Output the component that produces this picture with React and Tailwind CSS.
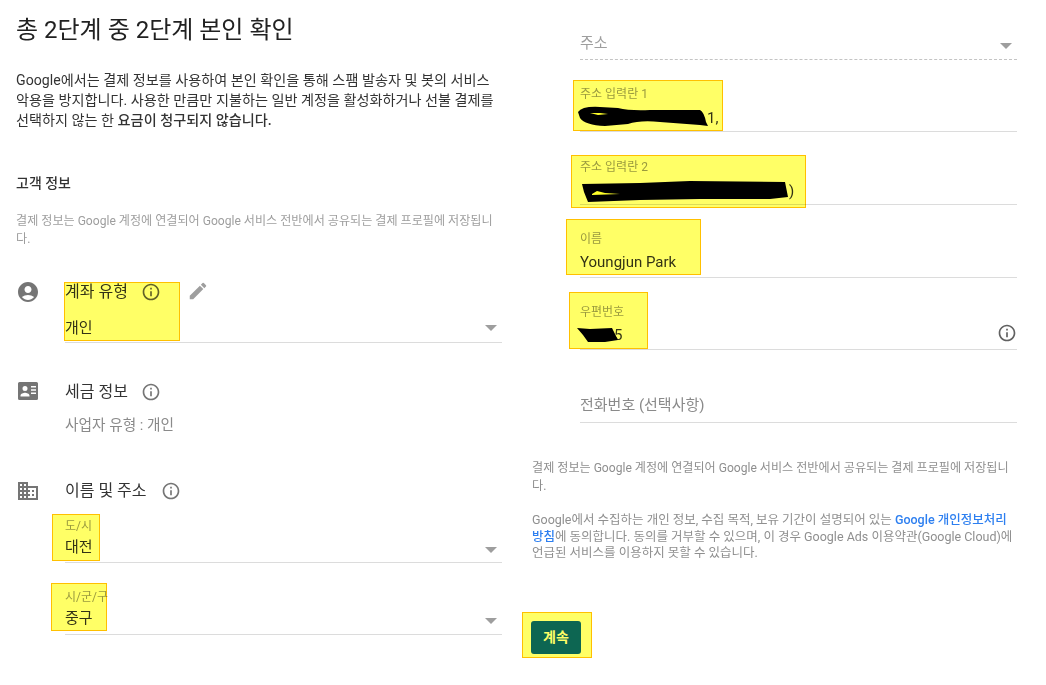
import { MdAccountCircle, MdDomain, MdEdit, MdInfoOutline } from "react-icons/md";

function Arrow({ className }) {
  return (
    <svg viewBox="0 0 12 6" className={`w-3 h-[6px] fill-[#9e9e9e] ${className || ""}`}>
      <path d="M0 0h12L6 6z" />
    </svg>
  );
}

function TaxIcon() {
  return (
    <svg viewBox="0 0 20 18" className="w-5 h-[18px]">
      <path
        fill="#757575"
        fillRule="evenodd"
        d="M1.5 0h17A1.5 1.5 0 0 1 20 1.5v15a1.5 1.5 0 0 1-1.5 1.5h-17A1.5 1.5 0 0 1 0 16.500v-15A1.500 1.500 0 0 1 1.500 0zM7 4a2.500 2.500 0 1 0 0 5 2.500 2.500 0 0 0 0-5zM2.500 13.500V14.500h9v-1c0-1.800-3-2.800-4.500-2.800s-4.500 1-4.500 2.800zM13 4v1.500h5V4zM13 7.300v1.500h5V7.300zM13 10.600v1.500h5v-1.500z"
      />
    </svg>
  );
}

function SelectField({ label, value, className, valueClass }) {
  return (
    <div className={`w-[437px] border-b border-[#dcdcdc] ${className}`}>
      <div className="text-xs leading-4 text-[#9a9a9a]">{label}</div>
      <div className={`flex items-center justify-between pr-[5px] text-[15px] leading-5 text-[#333] ${valueClass}`}>
        {value}
        <Arrow className="mt-[6px]" />
      </div>
    </div>
  );
}

function InputField({ label, value, className, valueClass, children }) {
  return (
    <div className={`relative border-b border-[#dcdcdc] ${className}`}>
      <div className="text-xs leading-4 text-[#9a9a9a]">{label}</div>
      <div className={`text-[15px] leading-5 text-[#333] ${valueClass}`}>{value}</div>
      {children}
    </div>
  );
}

export default function App() {
  return (
    <div className="relative flex h-[685px] w-[1046px] overflow-hidden bg-white font-['Roboto','Noto_Sans_CJK_KR',sans-serif]">
      {/* left column */}
      <div className="w-[532px] shrink-0 pl-4">
        <h1 className="mt-[14px] text-2xl leading-8 text-[#212121]">총 2단계 중 2단계 본인 확인</h1>
        <p className="mt-[24px] w-[482px] text-[14.15px] leading-5 text-[#333]">
          Google에서는 결제 정보를 사용하여 본인 확인을 통해 스팸 발송자 및 봇의 서비스 악용을 방지합니다. 사용한 만큼만 지불하는 일반 계정을 활성화하거나 선불 결제를 선택하지 않는 한{" "}
          <span className="font-medium">요금이 청구되지 않습니다.</span>
        </p>
        <h2 className="mt-[43px] text-sm leading-5 font-medium text-[#333]">고객 정보</h2>
        <p className="mt-[19px] w-[482px] text-[12.1px] leading-[18px] text-[#9e9e9e]">
          결제 정보는 Google 계정에 연결되어 Google 서비스 전반에서 공유되는 결제 프로필에 저장됩니다.
        </p>

        <div className="mt-[34px] flex">
          <MdAccountCircle className="mt-[-2px] w-6 h-6 text-[#757575]" />
          <div className="ml-[25px] w-[437px] h-[61px] border-b border-[#dcdcdc]">
            <div className="flex items-center text-base leading-5 text-[#333]">
              계좌 유형
              <MdInfoOutline className="ml-[13px] w-5 h-5 text-[#616161]" />
              <MdEdit className="ml-[26px] mt-[-2px] w-[22px] h-[22px] text-[#9e9e9e]" />
            </div>
            <div className="mt-[16px] flex items-center justify-between pr-[5px] text-[15px] leading-5 text-[#333]">
              개인
              <Arrow />
            </div>
          </div>
        </div>

        <div className="mt-[39px] flex">
          <div className="ml-[2px]">
            <TaxIcon />
          </div>
          <div className="ml-[27px]">
            <div className="flex items-center text-base leading-5 text-[#333]">
              세금 정보
              <MdInfoOutline className="ml-[13px] w-5 h-5 text-[#757575]" />
            </div>
            <div className="mt-[13px] text-[14.7px] leading-5 text-[#8a8a8a]">사업자 유형 : 개인</div>
          </div>
        </div>

        <div className="mt-[46px] flex">
          <MdDomain className="mt-[-2px] w-6 h-6 text-[#757575]" />
          <div className="ml-[25px]">
            <div className="flex items-center text-base leading-5 text-[#333]">
              이름 및 주소
              <MdInfoOutline className="ml-[14px] w-5 h-5 text-[#757575]" />
            </div>
            <SelectField label="도/시" value="대전" className="mt-[17px] h-[45px]" valueClass="mt-[3px]" />
            <SelectField label="시/군/구" value="중구" className="mt-[26px] h-[46px]" valueClass="mt-[3px]" />
          </div>
        </div>
      </div>

      {/* right column */}
      <div className="flex-1">
        <div className="ml-[48px] mt-[32px] flex h-[28px] w-[437px] items-start justify-between border-b border-dashed border-[#c4c4c4] pt-px pr-[5px] text-[15px] leading-5 text-[#9e9e9e]">
          주소
          <Arrow className="mt-[10px]" />
        </div>
        <div className="ml-[48px] w-[437px]">
          <InputField label="주소 입력란 1" value={<span className="pl-[127px]">1,</span>} className="mt-[26px] h-[46px]" valueClass="mt-[6px]" />
          <InputField label="주소 입력란 2" value={<span className="pl-[209px]">)</span>} className="mt-[27px] h-[46px]" valueClass="mt-[6px]" />
          <InputField label="이름" value="Youngjun Park" className="mt-[26px] h-[47px]" valueClass="mt-[5px]" />
          <InputField label="우편번호" value={<span className="pl-[34px]">5</span>} className="mt-[26px] h-[46px]" valueClass="mt-[5px]">
            <MdInfoOutline className="absolute right-0 top-[19px] w-5 h-5 text-[#616161]" />
          </InputField>
          <div className="mt-[45px] h-[28px] border-b border-[#dcdcdc] text-[15px] leading-5 text-[#8a8a8a]">
            전화번호 (선택사항)
          </div>
        </div>
        <div className="mt-[36px] w-[486px] text-[#8f8f8f]">
          <p className="text-[12.1px] leading-[18px]">
            결제 정보는 Google 계정에 연결되어 Google 서비스 전반에서 공유되는 결제 프로필에 저장됩니다.
          </p>
          <p className="mt-[17px] text-[12.5px] leading-[16.500px]">
            Google에서 수집하는 개인 정보, 수집 목적, 보유 기간이 설명되어 있는{" "}
            <span className="font-medium text-[#2d7ff0]">Google 개인정보처리방침</span>에 동의합니다. 동의를 거부할 수 있으며, 이 경우 Google Ads 이용약관(Google Cloud)에 언급된 서비스를 이용하지 못할 수 있습니다.
          </p>
        </div>
        <button className="relative z-10 mt-[59px] ml-[-1px] h-[33px] w-[50px] rounded-[3px] bg-[#0d6652] text-sm font-bold text-[#ffff66]">
          계속
        </button>
      </div>

      {/* scribbled-out text */}
      <svg viewBox="0 0 1046 685" className="absolute inset-0 w-[1046px] h-[685px] pointer-events-none">
        <path d="M578 112 Q582 106 600 107 L618 108 Q630 111 650 110 L700 110 Q704 112 706 122 L708 126 L700 125 L660 122 Q640 120 628 124 L605 126 Q585 125 580 118z" fill="#000" />
        <path d="M582 184 L640 183 L690 181 L785 182 L788 197 L770 199 L700 199 L640 200 L588 202 L584 192z" fill="#000" />
        <path d="M577 328 L590 329 L612 328 L618 340 L605 342 L588 342 L583 335z" fill="#000" />
        <path d="M590 113 L600 113 L608 114 L598 115z" fill="#ffff66" />
        <path d="M592 194 L597 191 L605 193 L620 194 L592 195z" fill="#ffff66" />
      </svg>

      {/* yellow highlights */}
      <div className="absolute left-[64px] top-[282px] h-[59px] w-[116px] border border-[#ffc000] bg-[#ffff66] mix-blend-multiply" />
      <div className="absolute left-[52px] top-[514px] h-[47px] w-[48px] border border-[#ffc000] bg-[#ffff66] mix-blend-multiply" />
      <div className="absolute left-[51px] top-[583px] h-[48px] w-[56px] border border-[#ffc000] bg-[#ffff66] mix-blend-multiply" />
      <div className="absolute left-[573px] top-[80px] h-[51px] w-[150px] border border-[#ffc000] bg-[#ffff66] mix-blend-multiply" />
      <div className="absolute left-[571px] top-[155px] h-[53px] w-[235px] border border-[#ffc000] bg-[#ffff66] mix-blend-multiply" />
      <div className="absolute left-[566px] top-[219px] h-[56px] w-[135px] border border-[#ffc000] bg-[#ffff66] mix-blend-multiply" />
      <div className="absolute left-[569px] top-[292px] h-[57px] w-[79px] border border-[#ffc000] bg-[#ffff66] mix-blend-multiply" />
      <div className="absolute left-[522px] top-[612px] h-[46px] w-[70px] border border-[#ffc000] bg-[#ffff66]" />
    </div>
  );
}
